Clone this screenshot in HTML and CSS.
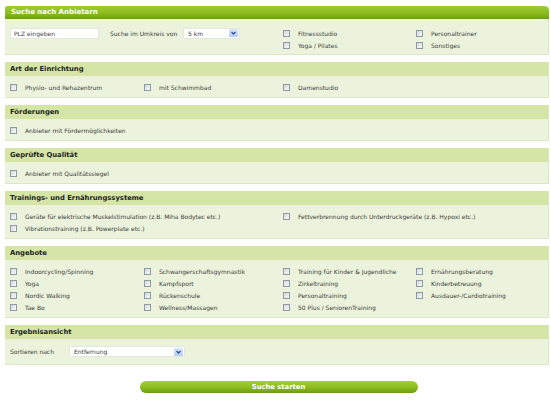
FILE: index.html
```html
<!DOCTYPE html>
<html lang="de">
<head>
<meta charset="utf-8">
<title>Suche nach Anbietern</title>
<link rel="stylesheet" href="styles.css">
</head>
<body>
<form class="page">
  <section class="box">
    <h2 class="main-head">Suche nach Anbietern</h2>
    <div class="main-body">
      <div class="location">
        <span class="plz">PLZ eingeben</span>
        <span class="radius-label">Suche im Umkreis von</span>
        <span class="select sel-radius"><span class="sel-text">5 km</span><span class="arrow"><svg viewBox="0 0 9 8" width="9" height="8"><path d="M2.5 3 L4.5 5 L6.5 3" fill="none" stroke="#2a4f9a" stroke-width="1.3"/></svg></span></span>
      </div>
      <div class="grid grid-2">
        <label class="cb"><span class="cbx"></span>Fitnessstudio</label>
        <label class="cb"><span class="cbx"></span>Personaltrainer</label>
        <label class="cb"><span class="cbx"></span>Yoga / Pilates</label>
        <label class="cb"><span class="cbx"></span>Sonstiges</label>
      </div>
    </div>
  </section>

  <section class="box">
    <h3 class="sec-head">Art der Einrichtung</h3>
    <div class="sec-body grid">
      <label class="cb"><span class="cbx"></span>Physio- und Rehazentrum</label>
      <label class="cb"><span class="cbx"></span>mit Schwimmbad</label>
      <label class="cb"><span class="cbx"></span>Damenstudio</label>
    </div>
  </section>

  <section class="box">
    <h3 class="sec-head">Förderungen</h3>
    <div class="sec-body grid">
      <label class="cb"><span class="cbx"></span>Anbieter mit Fördermöglichkeiten</label>
    </div>
  </section>

  <section class="box">
    <h3 class="sec-head">Geprüfte Qualität</h3>
    <div class="sec-body grid">
      <label class="cb"><span class="cbx"></span>Anbieter mit Qualitätssiegel</label>
    </div>
  </section>

  <section class="box">
    <h3 class="sec-head">Trainings- und Ernährungssysteme</h3>
    <div class="sec-body grid-wide">
      <label class="cb"><span class="cbx"></span>Geräte für elektrische Muskelstimulation (z.B. Miha Bodytec etc.)</label>
      <label class="cb"><span class="cbx"></span>Fettverbrennung durch Unterdruckgeräte (z.B. Hypoxi etc.)</label>
      <label class="cb"><span class="cbx"></span>Vibrationstraining (z.B. Powerplate etc.)</label>
    </div>
  </section>

  <section class="box">
    <h3 class="sec-head">Angebote</h3>
    <div class="sec-body grid">
      <label class="cb"><span class="cbx"></span>Indoorcycling/Spinning</label>
      <label class="cb"><span class="cbx"></span>Schwangerschaftsgymnastik</label>
      <label class="cb"><span class="cbx"></span>Training für Kinder &amp; Jugendliche</label>
      <label class="cb"><span class="cbx"></span>Ernährungsberatung</label>
      <label class="cb"><span class="cbx"></span>Yoga</label>
      <label class="cb"><span class="cbx"></span>Kampfsport</label>
      <label class="cb"><span class="cbx"></span>Zirkeltraining</label>
      <label class="cb"><span class="cbx"></span>Kinderbetreuung</label>
      <label class="cb"><span class="cbx"></span>Nordic Walking</label>
      <label class="cb"><span class="cbx"></span>Rückenschule</label>
      <label class="cb"><span class="cbx"></span>Personaltraining</label>
      <label class="cb"><span class="cbx"></span>Ausdauer-/Cardiotraining</label>
      <label class="cb"><span class="cbx"></span>Tae Bo</label>
      <label class="cb"><span class="cbx"></span>Wellness/Massagen</label>
      <label class="cb"><span class="cbx"></span>50 Plus / SeniorenTraining</label>
    </div>
  </section>

  <section class="box">
    <h3 class="sec-head">Ergebnisansicht</h3>
    <div class="sort-body">
      <span class="sort-label">Sortieren nach</span>
      <span class="select sel-sort"><span class="sel-text">Entfernung</span><span class="arrow"><svg viewBox="0 0 9 8" width="9" height="8"><path d="M2.5 3 L4.5 5 L6.5 3" fill="none" stroke="#2a4f9a" stroke-width="1.3"/></svg></span></span>
    </div>
  </section>

  <button class="submit" type="button">Suche starten</button>
</form>
</body>
</html>
```

FILE: styles.css
```css
* {
  box-sizing: border-box;
  margin: 0;
  padding: 0;
}

body {
  background: #ffffff;
  font-family: "DejaVu Sans", Verdana, sans-serif;
  font-size: 6px;
  color: #3b3b3b;
}

.page {
  display: flex;
  flex-direction: column;
  gap: 7px;
  padding: 6px 2px 0 5px;
}

.box {
  background: #ebf3dc;
  border-right: 1px solid #dbe6c4;
  border-bottom: 1px solid #dbe6c4;
}

.main-head {
  height: 13px;
  line-height: 13px;
  padding-left: 6px;
  font-size: 7px;
  font-weight: bold;
  color: #ffffff;
  background: linear-gradient(#a0cc33, #8bbd1f 55%, #6f9d12);
  border-radius: 3px 5px 0 0;
  margin-right: -1px;
}

.main-body {
  display: flex;
  padding: 8px 0 3px 5px;
}

.location {
  display: flex;
  align-items: center;
  width: 273px;
  height: 12px;
  white-space: nowrap;
}

.plz {
  width: 89px;
  height: 11px;
  line-height: 10px;
  padding-left: 3px;
  background: #ffffff;
  border: 1px solid #e3e8dc;
  color: #444;
}

.radius-label {
  width: 84px;
  padding-left: 11px;
}

.select {
  display: flex;
  align-items: center;
  justify-content: space-between;
  height: 11px;
  background: #ffffff;
  border: 1px solid #e3e8dc;
  padding: 0 1px 0 4px;
}

.sel-radius {
  width: 57px;
}

.arrow {
  display: flex;
  width: 9px;
  height: 8px;
  background: linear-gradient(#dbe7fb, #b9cdf2);
}

.grid {
  display: grid;
  grid-template-columns: 134px 139px 133px 1fr;
}

.grid-2 {
  grid-template-columns: 133px 1fr;
  flex: 1;
}

.grid-wide {
  display: grid;
  grid-template-columns: 273px 1fr;
}

.sec-head {
  height: 14px;
  line-height: 14px;
  padding-left: 5px;
  font-size: 6.8px;
  font-weight: bold;
  color: #232323;
  background: #d4e5a6;
}

.sec-body {
  padding: 5px 0 4px 5px;
}

.cb {
  display: flex;
  align-items: center;
  gap: 8px;
  height: 12px;
  white-space: nowrap;
}

.cbx {
  flex: none;
  width: 7px;
  height: 7px;
  border: 1px solid #8e9aa6;
  background: linear-gradient(135deg, #d4d6d8, #fafafa);
}

.sort-body {
  display: flex;
  align-items: center;
  padding: 7px 0 7px 5px;
  white-space: nowrap;
}

.sort-label {
  width: 59px;
}

.sel-sort {
  width: 116px;
}

.submit {
  align-self: center;
  width: 278px;
  height: 12px;
  margin-top: 9px;
  margin-left: 3px;
  border: 0;
  border-radius: 6px;
  background: linear-gradient(#a4cf34, #8bbd1f 55%, #6c9a12);
  color: #ffffff;
  font-family: "DejaVu Sans", Verdana, sans-serif;
  font-size: 6.8px;
  font-weight: bold;
  line-height: 12px;
}
```
